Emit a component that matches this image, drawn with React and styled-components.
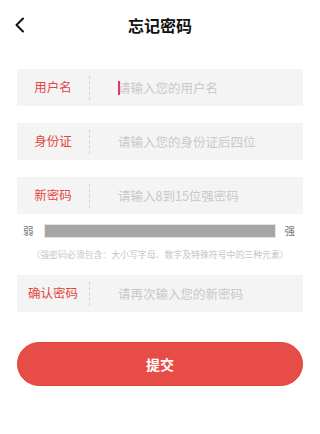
import React from 'react';
import styled, { createGlobalStyle } from 'styled-components';

const GlobalStyle = createGlobalStyle`
  html, body {
    margin: 0;
    padding: 0;
    background: #fff;
    font-family: "Noto Sans CJK SC", "Noto Sans", sans-serif;
  }
  * { box-sizing: border-box; }
`;

const Page = styled.div`
  width: 320px;
  min-height: 434px;
  background: #fff;
`;

const Header = styled.div`
  position: relative;
  height: 50px;
  display: flex;
  align-items: center;
  justify-content: center;
`;

const Back = styled.button`
  position: absolute;
  left: 10px;
  top: 14px;
  width: 20px;
  height: 22px;
  padding: 0;
  border: none;
  background: none;
  display: flex;
  align-items: center;
  justify-content: center;
`;

const Title = styled.h1`
  margin: 0;
  font-size: 16px;
  font-weight: 700;
  color: #111;
  letter-spacing: 0;
`;

const Form = styled.div`
  padding: 19px 17px 0;
  display: flex;
  flex-direction: column;
`;

const Field = styled.div`
  height: 37px;
  background: #f4f4f4;
  display: flex;
  align-items: center;
  margin-top: ${(p) => p.$mt || 0}px;
`;

const Label = styled.div`
  width: 72px;
  flex: none;
  text-align: center;
  font-size: 12.5px;
  color: #e4463f;
  line-height: 1;
`;

const Divider = styled.div`
  width: 0;
  height: 24px;
  border-left: 1px dashed #d2d2d2;
  flex: none;
`;

const InputWrap = styled.div`
  position: relative;
  flex: 1;
  margin-left: 28px;
  height: 100%;
  display: flex;
  align-items: center;
`;

const Input = styled.input`
  width: 100%;
  border: none;
  outline: none;
  background: transparent;
  padding: 0;
  font-family: inherit;
  font-size: 12.5px;
  color: #333;

  &::placeholder {
    color: #c9c9c9;
  }
`;

const Caret = styled.span`
  position: absolute;
  left: 0;
  top: 12px;
  width: 2px;
  height: 14px;
  background: #e8336e;
`;

const Strength = styled.div`
  margin-top: 10px;
  height: 13px;
  display: flex;
  align-items: center;
  padding: 0 8px 0 6px;
  font-size: 10.5px;
  color: #7a7a7a;
`;

const Bar = styled.div`
  flex: 1;
  height: 12px;
  margin: 0 10px 0 11px;
  background: #a6a6a6;
  box-shadow: 0 0 0 1px #e3e3e3;
`;

const Hint = styled.p`
  margin: 11px 0 0;
  line-height: 13px;
  font-size: 8.9px;
  color: #c6c6c6;
  text-align: center;
  white-space: nowrap;
`;

const Submit = styled.button`
  margin-top: 30px;
  height: 44px;
  border: 1px solid #de4640;
  border-radius: 22px;
  background: #e84c46;
  color: #fff;
  font-family: inherit;
  font-size: 14px;
  font-weight: 700;
  letter-spacing: 0;
`;

const fields = [
  { label: '用户名', placeholder: '请输入您的用户名', caret: true },
  { label: '身份证', placeholder: '请输入您的身份证后四位' },
  { label: '新密码', placeholder: '请输入8到15位强密码' },
];

const Row = ({ label, placeholder, caret, mt }) => (
  <Field $mt={mt}>
    <Label>{label}</Label>
    <Divider />
    <InputWrap>
      <Input placeholder={placeholder} />
      {caret && <Caret />}
    </InputWrap>
  </Field>
);

export default function App() {
  return (
    <Page>
      <GlobalStyle />
      <Header>
        <Back>
          <svg width="12" height="16" viewBox="0 0 12 16" fill="none">
            <path d="M9 1.5L2.5 8L9 14.5" stroke="#111" strokeWidth="2" strokeLinecap="round" strokeLinejoin="round" />
          </svg>
        </Back>
        <Title>忘记密码</Title>
      </Header>
      <Form>
        {fields.map((f, i) => (
          <Row key={f.label} {...f} mt={i === 0 ? 0 : 17} />
        ))}
        <Strength>
          <span>弱</span>
          <Bar />
          <span>强</span>
        </Strength>
        <Hint>（强密码必须包含：大小写字母、数字及特殊符号中的三种元素）</Hint>
        <Row label="确认密码" placeholder="请再次输入您的新密码" mt={14} />
        <Submit>提交</Submit>
      </Form>
    </Page>
  );
}
